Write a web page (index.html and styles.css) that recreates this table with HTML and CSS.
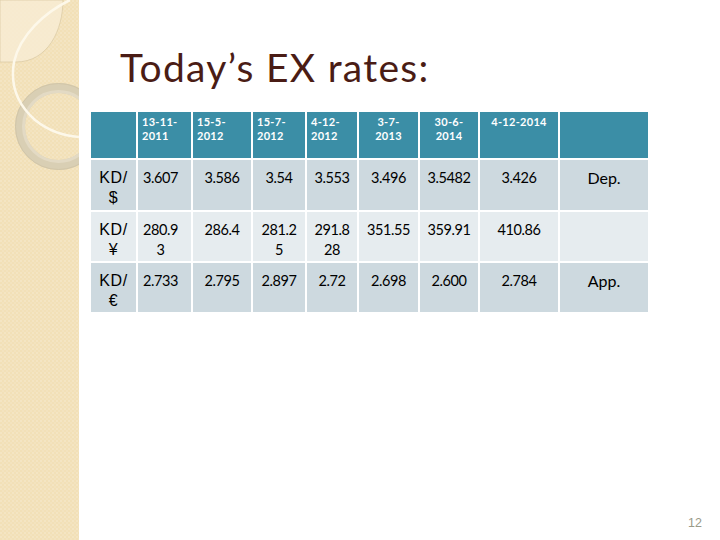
FILE: index.html
```html
<!DOCTYPE html>
<html>
<head>
<meta charset="utf-8">
<link rel="stylesheet" href="styles.css">
</head>
<body>
<div class="slide">
  <div class="strip">
    <svg class="deco" width="79" height="540" viewBox="0 0 79 540">
      <defs>
        <pattern id="tex" width="4" height="4" patternUnits="userSpaceOnUse">
          <rect width="4" height="4" fill="#f2e0b7"/>
          <rect width="2" height="2" fill="#f4e5c3"/>
          <rect x="2" y="2" width="2" height="2" fill="#f3e3bf"/>
        </pattern>
      </defs>
      <rect width="79" height="540" fill="url(#tex)"/>
      <path d="M0 0 H63 C63 30 48 62 16 62 H0 Z" fill="#f7ecd4" fill-opacity="0.8" stroke="#dccca6" stroke-width="0.8"/>
      <circle cx="58.5" cy="126.5" r="38.5" fill="none" stroke="#d9cfb4" stroke-width="10"/>
      <circle cx="58.5" cy="126.5" r="35" fill="none" stroke="#e3dac4" stroke-width="3"/>
      <circle cx="58.5" cy="126.5" r="43" fill="none" stroke="#d2c6a8" stroke-width="1"/>
      <path d="M70 0 C45 12 20 35 14 62 C10 85 18 105 35 120 C50 132 65 136 79 137" fill="none" stroke="#fdf8ea" stroke-width="2.5"/>
    </svg>
  </div>
  <div class="main">
    <h1 class="title">Today’s EX rates:</h1>
    <div class="rates">
      <div class="cell head"></div>
      <div class="cell head left">13-11-<br>2011</div>
      <div class="cell head left">15-5-<br>2012</div>
      <div class="cell head left">15-7-<br>2012</div>
      <div class="cell head left">4-12-<br>2012</div>
      <div class="cell head">3-7-<br>2013</div>
      <div class="cell head">30-6-<br>2014</div>
      <div class="cell head">4-12-2014</div>
      <div class="cell head"></div>

      <div class="cell dark label">KD/<br>$</div>
      <div class="cell dark num first"><span>3.607</span></div>
      <div class="cell dark num">3.586</div>
      <div class="cell dark num">3.54</div>
      <div class="cell dark num">3.553</div>
      <div class="cell dark num">3.496</div>
      <div class="cell dark num">3.5482</div>
      <div class="cell dark num">3.426</div>
      <div class="cell dark note">Dep.</div>

      <div class="cell light label">KD/<br>¥</div>
      <div class="cell light num first"><span>280.9<br>3</span></div>
      <div class="cell light num">286.4</div>
      <div class="cell light num">281.2<br>5</div>
      <div class="cell light num">291.8<br>28</div>
      <div class="cell light num">351.55</div>
      <div class="cell light num">359.91</div>
      <div class="cell light num">410.86</div>
      <div class="cell light note"></div>

      <div class="cell dark label">KD/<br>€</div>
      <div class="cell dark num first"><span>2.733</span></div>
      <div class="cell dark num">2.795</div>
      <div class="cell dark num">2.897</div>
      <div class="cell dark num">2.72</div>
      <div class="cell dark num">2.698</div>
      <div class="cell dark num">2.600</div>
      <div class="cell dark num">2.784</div>
      <div class="cell dark note">App.</div>
    </div>
    <div class="pagenum">12</div>
  </div>
</div>
</body>
</html>
```

FILE: styles.css
```css
html, body {
  margin: 0;
  padding: 0;
  background: #ffffff;
}

.slide {
  display: flex;
  width: 720px;
  height: 540px;
  overflow: hidden;
}

.strip {
  width: 79px;
  height: 540px;
  flex: none;
}

.deco {
  display: block;
}

.main {
  flex: 1;
  display: flex;
  flex-direction: column;
  padding: 48px 0 10px 12px;
  box-sizing: border-box;
  height: 540px;
}

.title {
  margin: 0 0 25px 29px;
  font-family: Lato, "Liberation Sans", sans-serif;
  font-weight: 400;
  font-size: 39px;
  line-height: 39px;
  letter-spacing: 1.3px;
  color: #4a1c15;
}

.rates {
  display: grid;
  grid-template-columns: 45px 53px 58px 52px 50px 59px 58px 78px 88px;
  grid-template-rows: 46px 50px 49px 49px;
  gap: 2px;
  width: 557px;
  background: #ffffff;
}

.cell {
  box-sizing: border-box;
  text-align: center;
  color: #000000;
}

.head {
  background: #3b8ea6;
  color: #ffffff;
  font-family: Lato, "Liberation Sans", sans-serif;
  font-weight: 700;
  font-size: 11px;
  line-height: 14px;
  letter-spacing: 0.3px;
  padding-top: 3px;
}

.head.left {
  text-align: left;
  padding-left: 4px;
}

.dark {
  background: #cdd9df;
}

.light {
  background: #e6ecef;
}

.label {
  font-family: "Liberation Sans", Arial, sans-serif;
  font-size: 16px;
  line-height: 20px;
  padding-top: 7.5px;
  letter-spacing: 0.6px;
}

.num {
  font-family: Lato, "Liberation Sans", sans-serif;
  font-size: 14.5px;
  line-height: 20px;
  letter-spacing: -0.4px;
  padding-top: 7.5px;
}

.num.first {
  text-align: left;
  padding-left: 5px;
}

.num.first span {
  display: inline-block;
  text-align: center;
}

.note {
  font-family: Lato, "Liberation Sans", sans-serif;
  font-size: 16px;
  line-height: 20px;
  padding-top: 7.5px;
}

.pagenum {
  margin-top: auto;
  align-self: flex-end;
  margin-right: 18px;
  font-family: "Liberation Sans", Arial, sans-serif;
  font-size: 12.5px;
  line-height: 14px;
  color: #9a9a88;
}
```
